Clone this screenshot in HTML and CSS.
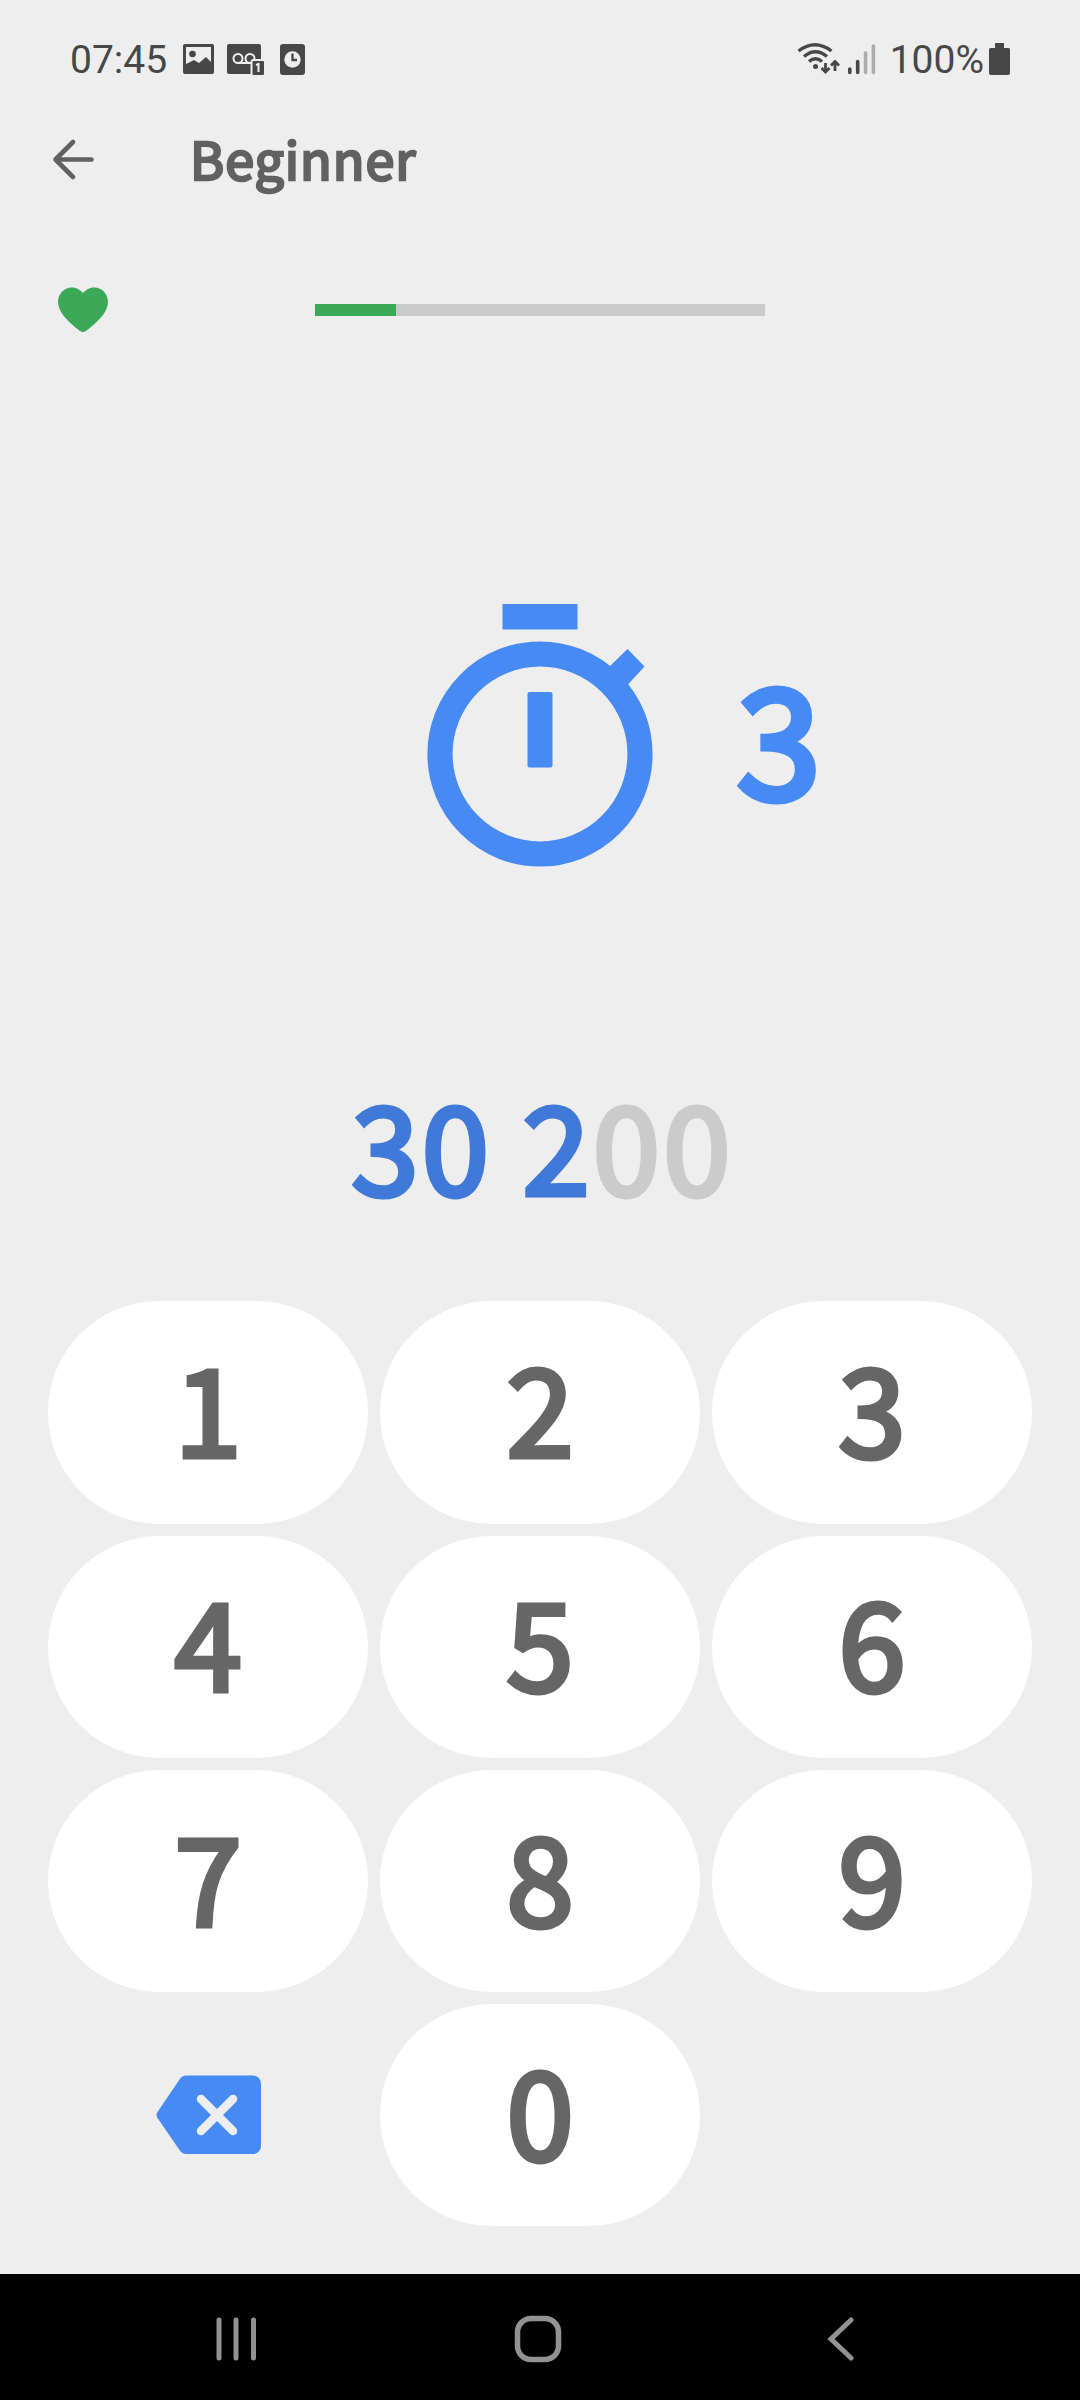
FILE: index.html
```html
<!DOCTYPE html>
<html lang="en">
<head>
    <meta charset="UTF-8">
    <meta name="viewport" content="width=device-width, initial-scale=1.0">
    <title>Beginner</title>
    <link rel="stylesheet" href="styles.css">
</head>
<body>
    <!-- Status bar -->
    <div class="status-bar">
        <span class="clock">07:45</span>
        <svg class="status-left" width="124" height="32" viewBox="182 43 124 32">
            <path fill="#474747" fill-rule="evenodd" d="M185 44h27a2 2 0 0 1 2 2v26a2 2 0 0 1-2 2h-27a2 2 0 0 1-2-2V46a2 2 0 0 1 2-2zM186 47v17l8-4 5 3 7-6 5 5V47z"/>
            <circle cx="192.500" cy="54" r="3.300" fill="#474747"/>
            <rect x="227" y="44" width="34" height="30" rx="2" fill="#474747"/>
            <g fill="none" stroke="#eee" stroke-width="2">
                <circle cx="238" cy="58.500" r="4.500"/>
                <circle cx="250" cy="58.500" r="4.500"/>
                <path d="M238 63h12"/>
            </g>
            <rect x="251.500" y="60" width="13.500" height="16" rx="2" fill="#474747" stroke="#eee" stroke-width="2"/>
            <path d="M256 65l2.500-1v8" fill="none" stroke="#eee" stroke-width="2"/>
            <rect x="280" y="44" width="25" height="31" rx="3" fill="#474747"/>
            <circle cx="292.500" cy="59.500" r="8.200" fill="#eee"/>
            <path d="M292.500 53.500v6.500h4.500" fill="none" stroke="#474747" stroke-width="2.300"/>
        </svg>
        <svg class="status-signal" width="80" height="34" viewBox="797 42 80 34">
            <g fill="none" stroke="#474747" stroke-width="3.200">
                <path d="M798.500 51q16.500-12.500 33 0"/>
                <path d="M804 56.500q11.500-9.500 23 0"/>
                <path d="M809 61.500q6.500-5.500 13 0"/>
                <path d="M825.500 63v8M821.500 68l4 4 4-4M835 71v-8M831 65.500l4-4 4 4" stroke-width="2.800"/>
            </g>
            <circle cx="815.500" cy="66.500" r="2.500" fill="#474747"/>
            <g stroke-width="3.600" stroke-linecap="round">
                <path d="M849.800 69v3.500M857.700 61.500v11" stroke="#474747"/>
                <path d="M865.600 53v19.500M873.400 46v26.500" stroke="#adadad"/>
            </g>
        </svg>
        <span class="battery-level">100%</span>
        <svg class="battery" width="22" height="33" viewBox="0 0 22 33">
            <path d="M6 0h9v5h4.500a1.500 1.500 0 0 1 1.500 1.500V30a2 2 0 0 1-2 2H2a2 2 0 0 1-2-2V6.500A1.500 1.500 0 0 1 1.500 5H6z" fill="#474747"/>
        </svg>
    </div>

    <!-- Title -->
    <header class="app-bar">
        <svg class="back" width="44" height="44" viewBox="0 0 44 44">
            <path d="M21 4L3.500 21.500L21 39M3.500 21.500H39.500" fill="none" stroke="#616161" stroke-width="4.600" stroke-linecap="round" stroke-linejoin="round"/>
        </svg>
        <h1>Beginner</h1>
    </header>

    <!-- Lives and progress -->
    <div class="progress-row">
        <svg class="heart" width="52" height="46" viewBox="0 0 52 46">
            <path d="M26 6C30 2 33 .5 37.500 .5C45 .5 51 7 51 15C51 26 39 36 29 44Q26 46 23 44C13 36 1 26 1 15C1 7 7 .5 14.500 .5C19 .5 22 2 26 6z" fill="#3ba957"/>
        </svg>
        <div class="progress"><div class="progress-value" style="width: 18%"></div></div>
    </div>

    <!-- Countdown -->
    <div class="timer">
        <svg class="stopwatch" width="226" height="263" viewBox="0 0 226 263">
            <g fill="#478af4">
                <path d="M75.500 0h75v25.500h-75z"/>
                <path d="M182 63l18.500-18L217.500 62.500L201 80.500L192 90z"/>
                <rect x="100.500" y="88" width="25" height="75.500" rx="2"/>
            </g>
            <circle cx="113" cy="150" r="100" fill="none" stroke="#478af4" stroke-width="25.200"/>
        </svg>
        <span class="seconds">3</span>
    </div>

    <div class="number"><span class="typed">30 2</span><span class="rest">00</span></div>

    <!-- Keypad -->
    <div class="keypad">
        <button>1</button>
        <button>2</button>
        <button>3</button>
        <button>4</button>
        <button>5</button>
        <button>6</button>
        <button>7</button>
        <button>8</button>
        <button>9</button>
        <div class="delete">
            <svg width="106" height="80" viewBox="0 0 106 80">
                <path d="M30 .5H97a8 8 0 0 1 8 8V71a8 8 0 0 1-8 8H30Q26 79 23.500 75L1.500 43Q-.5 40 1.500 37L23.500 4.500Q26 .5 30 .5z" fill="#478af4"/>
                <path d="M45 24l32 32M77 24l-32 32" stroke="#eee" stroke-width="8.500" stroke-linecap="round"/>
            </svg>
        </div>
        <button>0</button>
    </div>

    <!-- Navigation bar -->
    <nav class="nav-bar">
        <svg width="42" height="44" viewBox="0 0 42 44">
            <path d="M4 3v38M21 3v38M38.500 3v38" stroke="#929292" stroke-width="5" stroke-linecap="round"/>
        </svg>
        <svg class="home" width="48" height="48" viewBox="0 0 48 48">
            <rect x="3.500" y="3.500" width="41" height="41" rx="13.500" fill="none" stroke="#929292" stroke-width="5.500"/>
        </svg>
        <svg width="28" height="44" viewBox="0 0 28 44">
            <path d="M24 3L4 22L24 41" fill="none" stroke="#929292" stroke-width="5" stroke-linecap="round"/>
        </svg>
    </nav>
</body>
</html>
```
FILE: styles.css
```css
* {
    box-sizing: border-box;
}

body {
    font-family: "Noto Sans CJK SC", "Noto Sans", sans-serif;
    background-color: #eeeeee;
    color: #616161;
    margin: 0;
    width: 1080px;
    height: 2400px;
    display: flex;
    flex-direction: column;
    overflow: hidden;
}

svg {
    display: block;
    flex: none;
}

.status-bar {
    height: 118px;
    padding: 0 69px 0 70px;
    display: flex;
    align-items: center;
    font-family: Roboto, sans-serif;
    font-size: 39px;
    color: #474747;
}

.clock,
.battery-level {
    padding-top: 2px;
}

.clock {
    width: 96px;
}

.status-left {
    margin-left: 16px;
}

.status-signal {
    margin-left: auto;
}

.battery-level {
    margin: 0 5px 0 13px;
}

.app-bar {
    height: 82px;
    padding: 1px 0 0 52px;
    display: flex;
    align-items: center;
}

h1 {
    font-size: 52px;
    font-weight: normal;
    line-height: 80px;
    letter-spacing: 1px;
    margin: 0 0 3px 94px;
    -webkit-text-stroke: 2.6px currentColor;
}

.progress-row {
    height: 220px;
    padding: 87px 0 0 57px;
    display: flex;
    align-items: flex-start;
}

.progress {
    width: 450px;
    height: 12px;
    margin: 17px 0 0 206px;
    background: #cacaca;
}

.progress-value {
    height: 12px;
    background: #3ba957;
}

.timer {
    height: 630px;
    padding-top: 184px;
    display: grid;
    grid-template-columns: 427px 226px 1fr;
    align-items: start;
}

.stopwatch {
    grid-column: 2;
}

.seconds {
    margin: 49px 0 0 84px;
    font-size: 151px;
    line-height: 160px;
    color: #478af4;
    -webkit-text-stroke: 7px currentColor;
}

.number {
    height: 251.3px;
    padding: 28px 0 0 5px;
    text-align: center;
    font-size: 121px;
    line-height: 130px;
    letter-spacing: 3.2px;
    -webkit-text-stroke: 5px currentColor;
}

.typed {
    color: #4179d9;
}

.rest {
    color: #cbcbcb;
}

.keypad {
    padding: 0 48px;
    display: grid;
    grid-template-columns: repeat(3, 320px);
    grid-auto-rows: 222.3px;
    gap: 12px;
}

button {
    font: inherit;
    font-size: 121px;
    line-height: 130px;
    color: #666666;
    background: #ffffff;
    border: none;
    border-radius: 111px;
    padding: 0 0 15px;
    -webkit-text-stroke: 5px currentColor;
}

.delete {
    display: flex;
    align-items: center;
    padding-left: 108px;
}

.nav-bar {
    height: 126px;
    margin-top: auto;
    padding: 3px 225px 0 215px;
    display: flex;
    align-items: center;
    justify-content: space-between;
    background: #000000;
}

.home {
    margin-right: 8px;
}
```
